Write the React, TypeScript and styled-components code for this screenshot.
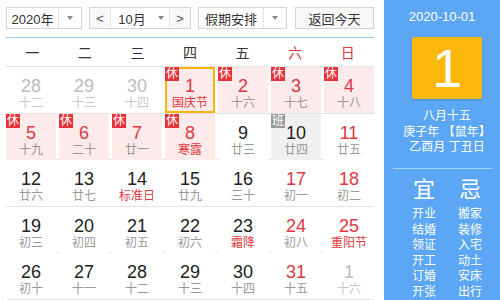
import styled, { createGlobalStyle } from 'styled-components';

const GlobalStyle = createGlobalStyle`
    html, body {
        margin: 0;
        padding: 0;
        background: #fff;
    }
    body {
        font-family: 'Liberation Sans', 'Noto Sans CJK SC', sans-serif;
        color: #333;
    }
`;

const Page = styled.div`
    display: flex;
    width: 500px;
    height: 300px;
    overflow: hidden;
`;

const Main = styled.div`
    width: 368px;
    padding: 7px 10px 0 6px;
    display: flex;
    flex-direction: column;
`;

const Toolbar = styled.div`
    display: flex;
    height: 22px;
    gap: 7px;
    margin-bottom: 8px;
`;

const Box = styled.div<{ $w: number }>`
    display: flex;
    width: ${(p) => p.$w}px;
    height: 22px;
    border: 1px solid #d4d4d4;
    box-sizing: border-box;
    background: #fff;
    font-size: 13px;
    color: #333;
`;

const BoxLabel = styled.div`
    flex: 1;
    display: flex;
    align-items: center;
    justify-content: center;
`;

const Arrow = styled.div<{ $bare?: boolean }>`
    width: ${(p) => (p.$bare ? 16 : 22)}px;
    border-left: ${(p) => (p.$bare ? 'none' : '1px solid #e2e2e2')};
    display: flex;
    align-items: center;
    justify-content: center;
    &::after {
        content: '';
        border-left: 3px solid transparent;
        border-right: 3px solid transparent;
        border-top: 4px solid #888;
    }
`;

const Step = styled.div<{ $side: 'l' | 'r' }>`
    width: 20px;
    background: #f8f8f8;
    display: flex;
    align-items: center;
    justify-content: center;
    color: #555;
    font-size: 13px;
    ${(p) => (p.$side === 'l' ? 'border-right: 1px solid #e2e2e2;' : 'border-left: 1px solid #e2e2e2;')}
`;

const TodayButton = styled.div`
    width: 79px;
    height: 22px;
    margin-left: 1px;
    border: 1px solid #d4d4d4;
    box-sizing: border-box;
    background: #f8f8f8;
    font-size: 13px;
    display: flex;
    align-items: center;
    justify-content: center;
    color: #333;
`;

const Calendar = styled.div`
    border-top: 1px solid #9ccaf2;
    display: flex;
    flex-direction: column;
`;

const WeekHead = styled.div`
    display: grid;
    grid-template-columns: repeat(7, 1fr);
    height: 28px;
    border-bottom: 1px solid #e3e3e3;
`;

const WeekDay = styled.div<{ $red?: boolean }>`
    display: flex;
    align-items: center;
    justify-content: center;
    font-size: 14px;
    color: ${(p) => (p.$red ? '#e0383e' : '#333')};
`;

const Row = styled.div`
    display: grid;
    grid-template-columns: repeat(7, 1fr);
    column-gap: 3px;
    height: 46.6px;
    box-sizing: border-box;
    border-bottom: 1px solid #e3e3e3;
`;

const Cell = styled.div<{ $bg: string; $focus?: boolean }>`
    position: relative;
    background: ${(p) => p.$bg};
    display: flex;
    flex-direction: column;
    align-items: center;
    padding-top: 7px;
    box-sizing: border-box;
    border: 2px solid ${(p) => (p.$focus ? '#f7b50c' : 'transparent')};
    margin-bottom: 1px;
`;

const Num = styled.div<{ $c: string }>`
    font-size: 18px;
    line-height: 20px;
    color: ${(p) => p.$c};
`;

const Lunar = styled.div<{ $c: string }>`
    font-size: 12px;
    line-height: 15px;
    color: ${(p) => p.$c};
`;

const Badge = styled.div<{ $work?: boolean }>`
    position: absolute;
    left: -2px;
    top: -2px;
    width: 14px;
    height: 14px;
    background: ${(p) => (p.$work ? '#9a9a9a' : '#e8323a')};
    color: #fff;
    font-size: 12px;
    line-height: 14px;
    text-align: center;
`;

const Side = styled.div`
    width: 116px;
    background: #5ba6f5;
    color: #fff;
    display: flex;
    flex-direction: column;
    align-items: center;
    padding-left: 10px;
    box-sizing: border-box;
`;

const DateText = styled.div`
    font-size: 13px;
    margin-top: 9px;
    margin-left: -10px;
`;

const DayBox = styled.div`
    width: 70px;
    height: 63px;
    margin-top: 13px;
    background: #fbb70b;
    border-radius: 2px;
    box-shadow: 0 1px 2px rgba(0, 0, 0, 0.15);
    display: flex;
    align-items: center;
    justify-content: center;
    font-size: 54px;
    font-family: 'Liberation Sans', sans-serif;
`;

const Info = styled.div`
    margin-top: 10px;
    font-size: 12px;
    line-height: 15.5px;
    text-align: center;
`;

const Divider = styled.div`
    width: 99px;
    margin-left: -10px;
    height: 1px;
    background: rgba(255, 255, 255, 0.45);
    margin-top: 12px;
`;

const Lists = styled.div`
    display: flex;
    gap: 22px;
    margin-top: 9px;
`;

const List = styled.div`
    display: flex;
    flex-direction: column;
    align-items: center;
    font-size: 12px;
    line-height: 15.5px;
`;

const Big = styled.div`
    font-size: 22px;
    line-height: 26px;
    margin-bottom: 4px;
`;

type Day = {
    n: number;
    l: string;
    other?: boolean;
    red?: boolean;
    fest?: boolean;
    rest?: boolean;
    work?: boolean;
    focus?: boolean;
};

const weeks: Day[][] = [
    [
        { n: 28, l: '十二', other: true },
        { n: 29, l: '十三', other: true },
        { n: 30, l: '十四', other: true },
        { n: 1, l: '国庆节', red: true, fest: true, rest: true, focus: true },
        { n: 2, l: '十六', red: true, rest: true },
        { n: 3, l: '十七', red: true, rest: true },
        { n: 4, l: '十八', red: true, rest: true },
    ],
    [
        { n: 5, l: '十九', red: true, rest: true },
        { n: 6, l: '二十', red: true, rest: true },
        { n: 7, l: '廿一', red: true, rest: true },
        { n: 8, l: '寒露', red: true, fest: true, rest: true },
        { n: 9, l: '廿三' },
        { n: 10, l: '廿四', work: true },
        { n: 11, l: '廿五', red: true },
    ],
    [
        { n: 12, l: '廿六' },
        { n: 13, l: '廿七' },
        { n: 14, l: '标准日', fest: true },
        { n: 15, l: '廿九' },
        { n: 16, l: '三十' },
        { n: 17, l: '初一', red: true },
        { n: 18, l: '初二', red: true },
    ],
    [
        { n: 19, l: '初三' },
        { n: 20, l: '初四' },
        { n: 21, l: '初五' },
        { n: 22, l: '初六' },
        { n: 23, l: '霜降', fest: true },
        { n: 24, l: '初八', red: true },
        { n: 25, l: '重阳节', red: true, fest: true },
    ],
    [
        { n: 26, l: '初十' },
        { n: 27, l: '十一' },
        { n: 28, l: '十二' },
        { n: 29, l: '十三' },
        { n: 30, l: '十四' },
        { n: 31, l: '十五', red: true },
        { n: 1, l: '十六', other: true },
    ],
];

const weekNames = ['一', '二', '三', '四', '五', '六', '日'];
const good = ['开业', '结婚', '领证', '开工', '订婚', '开张'];
const bad = ['搬家', '装修', '入宅', '动土', '安床', '出行'];

const numColor = (d: Day) => (d.other ? '#bdbdbd' : d.red ? '#e0383e' : '#222');
const lunarColor = (d: Day) => (d.other ? '#c8c8c8' : d.fest ? '#e0383e' : '#999');
const cellBg = (d: Day) => (d.rest ? '#fdeaea' : d.work ? '#f0f0f0' : '#fff');

const App = () => {
    return (
        <>
            <GlobalStyle />
            <Page>
                <Main>
                    <Toolbar>
                        <Box $w={76}>
                            <BoxLabel>2020年</BoxLabel>
                            <Arrow />
                        </Box>
                        <Box $w={102}>
                            <Step $side="l">&lt;</Step>
                            <BoxLabel>10月</BoxLabel>
                            <Arrow $bare />
                            <Step $side="r">&gt;</Step>
                        </Box>
                        <Box $w={89}>
                            <BoxLabel>假期安排</BoxLabel>
                            <Arrow />
                        </Box>
                        <TodayButton>返回今天</TodayButton>
                    </Toolbar>
                    <Calendar>
                        <WeekHead>
                            {weekNames.map((w, i) => (
                                <WeekDay key={w} $red={i >= 5}>
                                    {w}
                                </WeekDay>
                            ))}
                        </WeekHead>
                        {weeks.map((week, wi) => (
                            <Row key={wi}>
                                {week.map((d, di) => (
                                    <Cell key={di} $bg={cellBg(d)} $focus={d.focus}>
                                        {d.rest && <Badge>休</Badge>}
                                        {d.work && <Badge $work>班</Badge>}
                                        <Num $c={numColor(d)}>{d.n}</Num>
                                        <Lunar $c={lunarColor(d)}>{d.l}</Lunar>
                                    </Cell>
                                ))}
                            </Row>
                        ))}
                    </Calendar>
                </Main>
                <Side>
                    <DateText>2020-10-01</DateText>
                    <DayBox>1</DayBox>
                    <Info>
                        <div>八月十五</div>
                        <div>庚子年 【鼠年】</div>
                        <div>乙酉月 丁丑日</div>
                    </Info>
                    <Divider />
                    <Lists>
                        <List>
                            <Big>宜</Big>
                            {good.map((g) => (
                                <div key={g}>{g}</div>
                            ))}
                        </List>
                        <List>
                            <Big>忌</Big>
                            {bad.map((b) => (
                                <div key={b}>{b}</div>
                            ))}
                        </List>
                    </Lists>
                </Side>
            </Page>
        </>
    );
};

export default App;
